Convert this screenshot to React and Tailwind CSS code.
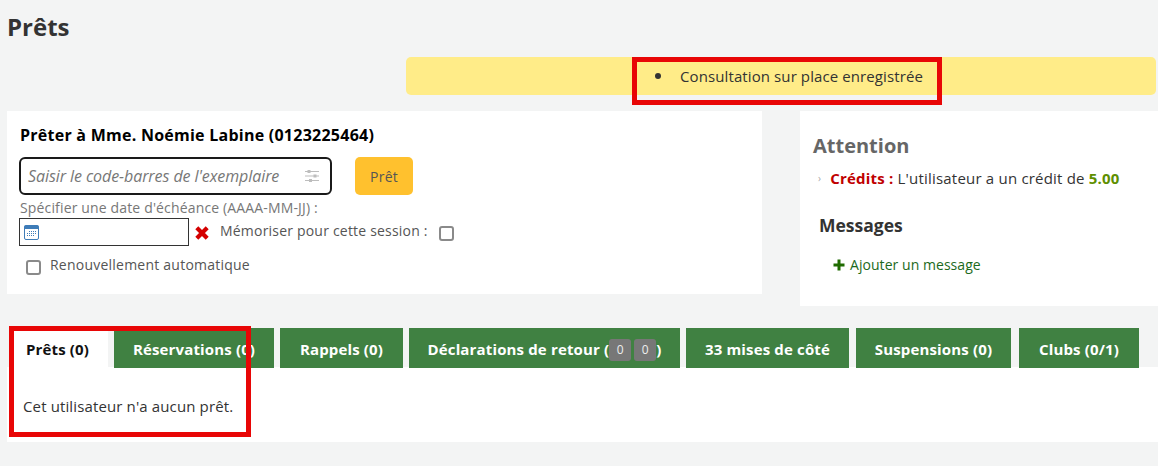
const font = { fontFamily: '"Open Sans","Noto Sans",sans-serif' };

function Tab({ children, active, className = "" }) {
  return (
    <div
      className={
        "flex items-center justify-center pt-[3px] text-[15px] font-bold tracking-[0.15px] " +
        (active ? "bg-white text-[#111] h-[39px] self-start " : "h-10 bg-[#408142] text-white ") +
        className
      }
    >
      {children}
    </div>
  );
}

function Box({ className }) {
  return <span className={"absolute border-[5px] border-[#e80606] " + className} />;
}

export default function App() {
  return (
    <div
      className="relative w-[1158px] h-[466px] overflow-hidden bg-[#f3f4f4] text-[#333] text-[14px]"
      style={font}
    >
      <div className="pl-[7px] pt-[10px] h-[57px]">
        <h1 className="text-[24px] leading-[33px] font-bold text-[#333]">Prêts</h1>
      </div>

      <div className="ml-[406px] mr-[2px] h-[38px] rounded-[5px] bg-[#ffec88] flex justify-center items-center">
        <ul className="list-disc pl-[40px] pr-[5px] text-[15px] leading-[20px] tracking-[0.1px] text-[#333] marker:text-[18px] -mt-[2px]">
          <li className="pl-[6px]">Consultation sur place enregistrée</li>
        </ul>
      </div>

      <div className="mt-4 flex items-start">
        <section className="ml-[7px] w-[755px] h-[183px] bg-white pl-[12px] pt-[14px]">
          <h3 className="ml-px text-[16px] leading-[21px] font-bold text-black tracking-[0.25px]">
            Prêter à Mme. Noémie Labine (0123225464)
          </h3>
          <div className="mt-[11px] flex items-center">
            <div className="w-[313px] h-[38px] border-2 border-[#1a1a1a] rounded-[6px] flex items-center justify-between pl-[7px] pr-[10px]">
              <span className="italic text-[#777] text-[16px] tracking-[-0.08px]">Saisir le code-barres de l'exemplaire</span>
              <svg width="16" height="14" viewBox="0 0 16 14" fill="none" stroke="#bdbdbd" strokeWidth="1.2">
                <path d="M1 2.5h14M1 7h14M1 11.5h14" />
                <rect x="3.5" y="1" width="3" height="3" fill="#bdbdbd" stroke="none" />
                <rect x="9.5" y="5.5" width="3" height="3" fill="#bdbdbd" stroke="none" />
                <rect x="5" y="10" width="3" height="3" fill="#bdbdbd" stroke="none" />
              </svg>
            </div>
            <button className="ml-[23px] w-[58px] h-[38px] rounded-[5px] bg-[#ffc12e] text-[#555] text-[14px] tracking-[0.2px]">
              Prêt
            </button>
          </div>
          <div className="ml-px text-[#777] leading-[20px] mt-[3px] h-[18px] tracking-[0.15px]">Spécifier une date d'échéance (AAAA-MM-JJ) :</div>
          <div className="flex items-center h-[28px] mt-[2px]">
            <div className="w-[170px] h-[28px] border border-[#333] flex items-center pl-[4px] pt-[1px]">
              <svg width="15" height="15" viewBox="0 0 15 15">
                <rect x="0.5" y="0.5" width="14" height="14" rx="1.5" fill="#fff" stroke="#3e7cb8" />
                <rect x="0.5" y="0.5" width="14" height="3.5" fill="#3e7cb8" />
                <path d="M5 6h1v1H5zM7 6h1v1H7zM9 6h1v1H9zM11 6h1v1h-1zM3 8h1v1H3zM5 8h1v1H5zM7 8h1v1H7zM9 8h1v1H9zM11 8h1v1h-1zM3 10h1v1H3zM5 10h1v1H5zM7 10h1v1H7zM9 10h1v1H9z" fill="#3e7cb8" />
              </svg>
            </div>
            <svg className="ml-[6px] mt-[2px]" width="14" height="14" viewBox="0 0 14 14">
              <path d="M1.8 1.8l10.4 10.4M12.2 1.8L1.8 12.2" stroke="#d40000" strokeWidth="4.2" />
            </svg>
            <span className="ml-[11px] text-[#555] -mt-[4px] tracking-[0.2px]">Mémoriser pour cette session :</span>
            <span className="ml-[11px] mt-[2px] w-[15px] h-[15px] rounded-[3px] border-2 border-[#8a8a8a] bg-white" />
          </div>
          <div className="flex items-center mt-[7px] h-[24px] ml-[7px]">
            <span className="mt-[5px] w-[15px] h-[15px] rounded-[3px] border-2 border-[#8a8a8a] bg-white" />
            <span className="ml-[9px] text-[#555] -mt-[1px] tracking-[0.23px]">Renouvellement automatique</span>
          </div>
        </section>

        <aside className="ml-[38px] w-[358px] h-[195px] bg-white pl-[13px] pt-[21px]">
          <h3 className="text-[20px] leading-[28px] font-bold text-[#666]">Attention</h3>
          <div className="mt-[8px] pl-[5px] flex items-center h-[20px] whitespace-pre text-[15px] tracking-[0.2px]">
            <span className="text-[#aaa] text-[10px] mr-[9px]">›</span>
            <b className="text-[#c00000]">Crédits : </b>
            <span>L'utilisateur a un crédit de </span>
            <b className="text-[#5e8f00]">5.00</b>
          </div>
          <h4 className="mt-[25px] ml-[6px] text-[17.5px] leading-[24px] font-bold text-[#333]">Messages</h4>
          <div className="mt-[17px] ml-[20px] flex items-center text-[#1c6a1c] tracking-[0.05px]">
            <svg width="12" height="12" viewBox="0 0 12 12">
              <path d="M6 0.5v11M0.5 6h11" stroke="#1f6b00" strokeWidth="3" />
            </svg>
            <span className="ml-[5px]">Ajouter un message</span>
          </div>
        </aside>
      </div>

      <div className="ml-[7px] mt-[22px] flex items-start pl-[7px]">
        <Tab active className="w-[94px] pr-[7px]">Prêts (0)</Tab>
        <Tab className="ml-[6px] w-[160px]">Réservations (0)</Tab>
        <Tab className="ml-[6px] w-[123px]">Rappels (0)</Tab>
        <Tab className="ml-[6px] w-[271px]">
          Déclarations de retour (
          <span className="w-[22px] h-[22px] rounded-[3px] bg-[#777] text-[#eee] font-normal text-[12px] flex items-center justify-center">0</span>
          <span className="ml-[3px] w-[22px] h-[22px] rounded-[3px] bg-[#777] text-[#eee] font-normal text-[12px] flex items-center justify-center">0</span>
          )
        </Tab>
        <Tab className="ml-[6px] w-[163px]">33 mises de côté</Tab>
        <Tab className="ml-[7px] w-[155px]">Suspensions (0)</Tab>
        <Tab className="ml-[8px] w-[120px]">Clubs (0/1)</Tab>
      </div>
      <div className="ml-[7px] -mt-[1px] h-[75px] bg-white pl-[16px] pt-[29px] leading-[20px] text-[15px] tracking-[0.13px]">
        Cet utilisateur n'a aucun prêt.
      </div>

      <Box className="left-[632px] top-[57px] w-[310px] h-[48px]" />
      <Box className="left-[9px] top-[326px] w-[242px] h-[111px]" />
    </div>
  );
}
